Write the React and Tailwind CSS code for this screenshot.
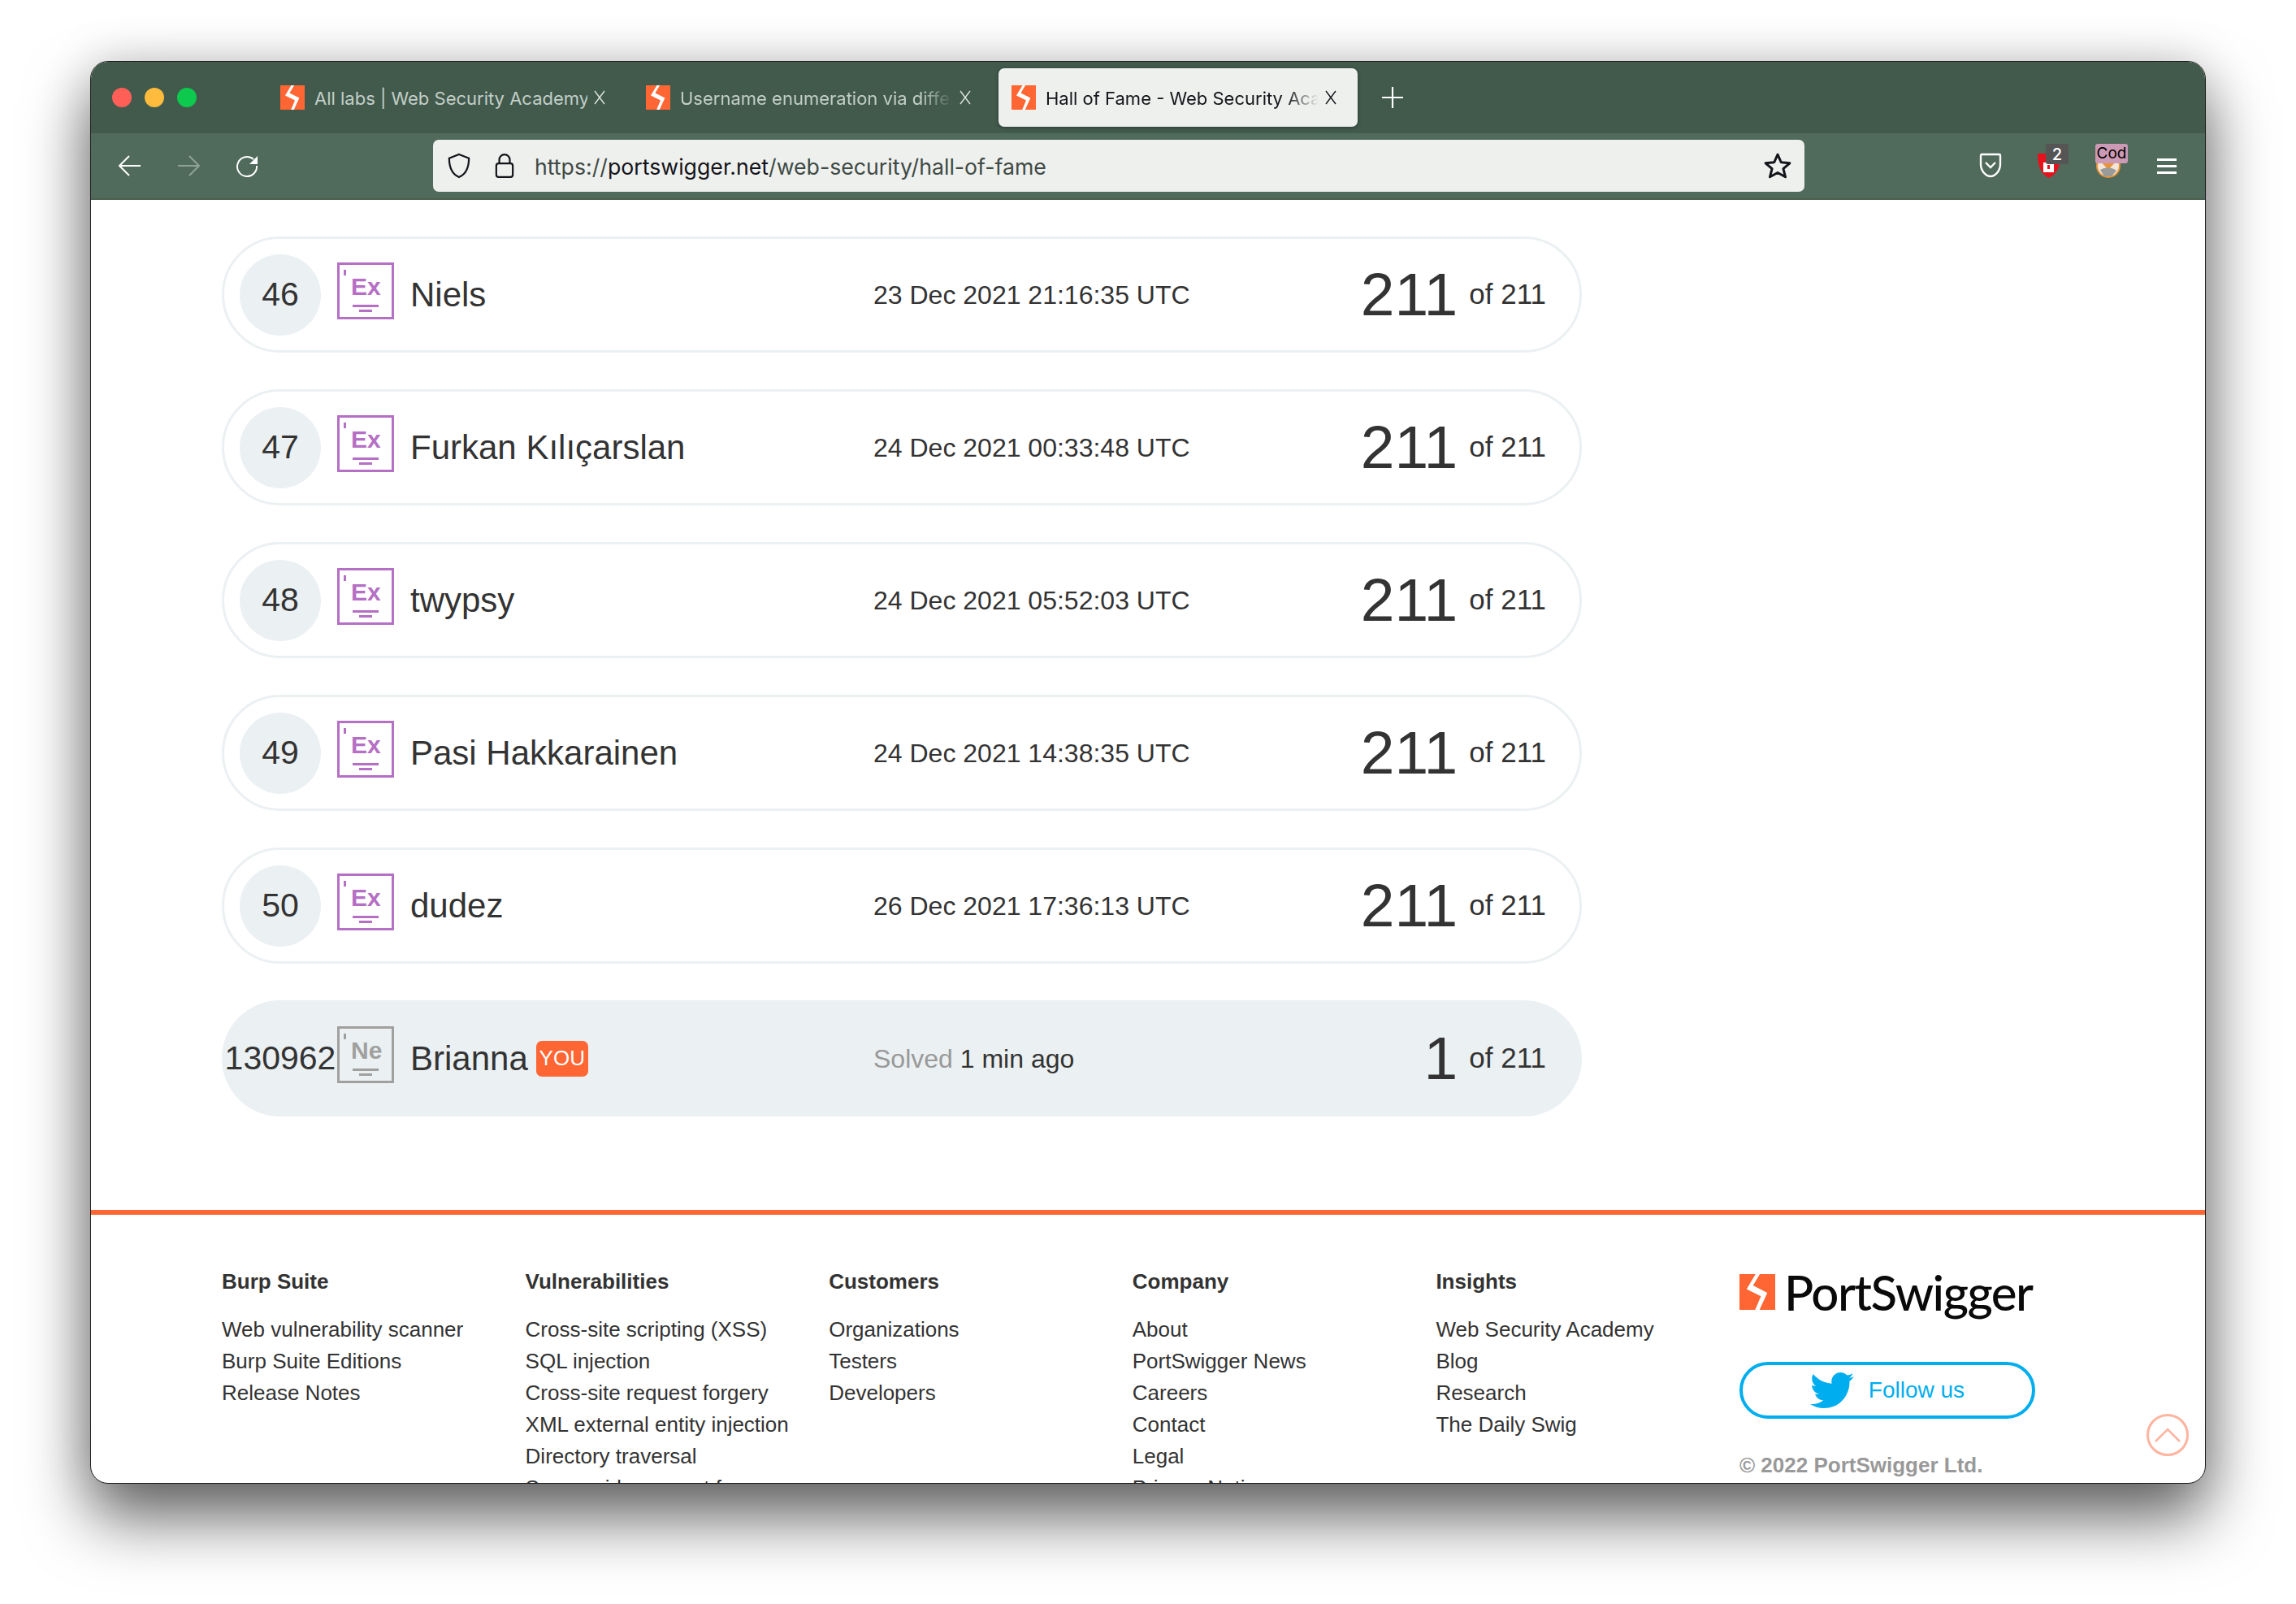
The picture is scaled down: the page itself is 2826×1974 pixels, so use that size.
import React from 'react';
import { FaTwitter } from 'react-icons/fa';

const rows = [
  { rank: '46', name: 'Niels', date: '23 Dec 2021 21:16:35 UTC' },
  { rank: '47', name: 'Furkan Kılıçarslan', date: '24 Dec 2021 00:33:48 UTC' },
  { rank: '48', name: 'twypsy', date: '24 Dec 2021 05:52:03 UTC' },
  { rank: '49', name: 'Pasi Hakkarainen', date: '24 Dec 2021 14:38:35 UTC' },
  { rank: '50', name: 'dudez', date: '26 Dec 2021 17:36:13 UTC' },
];

const footer = [
  { title: 'Burp Suite', links: ['Web vulnerability scanner', 'Burp Suite Editions', 'Release Notes'] },
  { title: 'Vulnerabilities', links: ['Cross-site scripting (XSS)', 'SQL injection', 'Cross-site request forgery', 'XML external entity injection', 'Directory traversal', 'Server-side request forgery'] },
  { title: 'Customers', links: ['Organizations', 'Testers', 'Developers'] },
  { title: 'Company', links: ['About', 'PortSwigger News', 'Careers', 'Contact', 'Legal', 'Privacy Notice'] },
  { title: 'Insights', links: ['Web Security Academy', 'Blog', 'Research', 'The Daily Swig'] },
];

const Bolt = ({ className }) => (
  <svg viewBox="0 0 100 100" className={className}>
    <rect width="100" height="100" fill="#ff6633" />
    <path d="M45 0H57L38 32L78 52L56 100H44L60 62L20 42Z" fill="#fff" />
  </svg>
);

const Close = ({ color }) => (
  <svg viewBox="0 0 14 18" className="w-[14px] h-[18px] shrink-0">
    <path d="M1 1 L13 17 M13 1 L1 17" stroke={color} strokeWidth="1.4" />
  </svg>
);

const Tab = ({ title, active, fade }) => (
  <div className={`w-[442px] h-[72px] flex items-center pl-[16px] rounded-[7px] ${active ? 'bg-[#eef0ee] shadow-[0_1px_4px_rgba(0,0,0,0.35)] text-[#15141a]' : 'text-[#c3cec8]'}`}>
    <Bolt className="w-[30px] h-[30px] shrink-0" />
    <div className={`ml-[12px] mt-[2px] w-[336px] whitespace-nowrap overflow-hidden text-[22px] ${fade ? '[mask-image:linear-gradient(to_right,black_88%,transparent_100%)]' : ''}`}>{title}</div>
    <div className="ml-[8px] flex"><Close color={active ? '#15141a' : '#dfe5e1'} /></div>
  </div>
);

const Element = ({ sym, gray }) => (
  <div className={`relative ml-[20px] mb-[9px] w-[70px] h-[70px] shrink-0 border-[3px] ${gray ? 'border-[#a0a09e] text-[#a0a09e]' : 'border-[#b56fc4] text-[#b56fc4]'}`}>
    <div className={`absolute left-[5px] top-[6px] w-[3px] h-[7px] ${gray ? 'bg-[#a0a09e]' : 'bg-[#b56fc4]'}`} />
    <div className="absolute left-[14px] top-[12px] text-[30px] leading-[30px] font-bold">{sym}</div>
    <div className={`absolute left-[16px] top-[49px] w-[32px] h-[3px] ${gray ? 'bg-[#a0a09e]' : 'bg-[#b56fc4]'}`} />
    <div className={`absolute left-[24px] top-[55px] w-[16px] h-[3px] ${gray ? 'bg-[#a0a09e]' : 'bg-[#b56fc4]'}`} />
  </div>
);

const Score = ({ value }) => (
  <div className="ml-auto flex items-center">
    <span className="text-[75px] leading-none">{value}</span>
    <span className="ml-[14px] text-[35px]">of 211</span>
  </div>
);

const Row = ({ rank, name, date }) => (
  <div className="h-[143px] rounded-[72px] border-[3px] border-[#ebf0f2] flex items-center pl-[19px] pr-[41px]">
    <div className="w-[100px] h-[100px] shrink-0 rounded-full bg-[#ebf0f2] flex items-center justify-center text-[41px]">{rank}</div>
    <Element sym="Ex" />
    <div className="ml-[20px] w-[570px] text-[42px]">{name}</div>
    <div className="text-[32px]">{date}</div>
    <Score value="211" />
  </div>
);

export default function App() {
  return (
    <div className="min-h-[1974px] bg-white pt-[75px] pl-[111px] font-['Liberation_Sans',sans-serif] text-[#333]">
      <div className="relative w-[2604px] h-[1751px] rounded-[22px] border border-[#1c1c1c] overflow-hidden shadow-[0_42px_80px_rgba(0,0,0,0.6),0_0_60px_rgba(0,0,0,0.15)] bg-white flex flex-col">
        <div className="h-[88px] shrink-0 bg-[#415a4c] flex items-center pl-[26px] font-['Inter',sans-serif]">
          <div className="flex gap-[16px]">
            <span className="w-[24px] h-[24px] rounded-full bg-[#ff5f57]" />
            <span className="w-[24px] h-[24px] rounded-full bg-[#ffbb3d]" />
            <span className="w-[24px] h-[24px] rounded-full bg-[#0dc94d]" />
          </div>
          <div className="ml-[87px] flex gap-[8px]">
            <Tab title="All labs | Web Security Academy" />
            <Tab title="Username enumeration via different responses" fade />
            <Tab title="Hall of Fame - Web Security Academy" active fade />
          </div>
          <svg viewBox="0 0 24 24" className="ml-[30px] w-[26px] h-[26px]" stroke="#fff" strokeWidth="2" fill="none"><path d="M12 0V24M0 12H24" /></svg>
        </div>
        <div className="h-[82px] shrink-0 bg-[#506a5b] border-b-[2px] border-[#48604f] flex items-center font-['Inter',sans-serif]">
          <svg viewBox="0 0 30 30" className="ml-[33px] w-[30px] h-[30px]" stroke="#fff" strokeWidth="2" fill="none"><path d="M28 15H2M14 3L2 15L14 27" /></svg>
          <svg viewBox="0 0 30 30" className="ml-[42px] w-[30px] h-[30px]" stroke="#8fa398" strokeWidth="2" fill="none"><path d="M2 15H28M16 3L28 15L16 27" /></svg>
          <svg viewBox="0 0 30 30" className="ml-[42px] w-[30px] h-[30px]" fill="none"><path d="M23 7A12 12 0 1 0 27 15" stroke="#fff" strokeWidth="2" /><path d="M28 3V13H18Z" fill="#fff" /></svg>
          <div className="ml-[214px] w-[1688px] h-[64px] rounded-[7px] bg-[#eef0ee] flex items-center text-[#15141a]">
            <svg viewBox="0 0 30 34" className="ml-[18px] w-[28px] h-[32px]" stroke="#15141a" strokeWidth="2.4" fill="none"><path d="M15 2L28 7C28 20 24 28 15 32C6 28 2 20 2 7Z" /></svg>
            <svg viewBox="0 0 26 34" className="ml-[30px] w-[24px] h-[32px]" stroke="#15141a" strokeWidth="2.4" fill="none"><path d="M6 14V9A7 7 0 0 1 20 9V14" /><rect x="2" y="14" width="22" height="18" rx="3" /></svg>
            <div className="ml-[25px] mt-[2px] text-[26.7px] text-[#3f4a44]">https://<span className="text-[#15141a]">portswigger.net</span>/web-security/hall-of-fame</div>
            <svg viewBox="0 0 32 32" className="ml-auto mr-[16px] w-[34px] h-[34px]" stroke="#15141a" strokeWidth="2.8" strokeLinejoin="round" fill="none"><path d="M16 3L20 12L30 13L22.5 19.5L25 29L16 24L7 29L9.5 19.5L2 13L12 12Z" /></svg>
          </div>
          <svg viewBox="0 0 28 32" className="ml-[215px] w-[28px] h-[32px]" stroke="#fff" strokeWidth="2.4" fill="none"><path d="M3 2H25Q26 2 26 4V14C26 22 20 29 14 29C8 29 2 22 2 14V4Q2 2 3 2Z" /><path d="M8 12L14 18L20 12" /></svg>
          <div className="relative ml-[43px] w-[30px] h-[30px]">
            <svg viewBox="0 0 30 30" className="absolute left-0 top-0 w-[30px] h-[30px]"><path d="M15 0L29 0C29 16 25 25 15 30C5 25 1 16 1 0Z" fill="#e8121c" /><rect x="8" y="11" width="13" height="12" fill="#fff" /><rect x="13" y="14" width="3" height="5" fill="#e8121c" /></svg>
            <div className="absolute left-[11px] top-[-12px] w-[28px] h-[25px] rounded-[3px] bg-[#555] text-white text-[20px] font-medium flex items-center justify-center">2</div>
          </div>
          <div className="relative ml-[43px] w-[30px] h-[30px]">
            <svg viewBox="0 0 30 30" className="absolute left-0 top-0 w-[30px] h-[30px]"><circle cx="15" cy="15" r="14" fill="#f3e6d8" stroke="#e8943a" strokeWidth="2" /><path d="M4 8H26L15 20Z" fill="#e8943a" /><path d="M5 20Q15 14 25 21L19 28H10Z" fill="#9a9a9a" /></svg>
            <div className="absolute left-[-1px] top-[-12px] w-[40px] h-[24px] rounded-[3px] bg-[#cc9ab4] text-black text-[19px] flex items-center justify-center">Cod</div>
          </div>
          <div className="ml-[45px] w-[24px] flex flex-col gap-[5px]">
            <span className="h-[3px] bg-white" />
            <span className="h-[3px] bg-white" />
            <span className="h-[3px] bg-white" />
          </div>
        </div>

        <div className="flex-1 overflow-hidden">
          <div className="pt-[45px] pl-[161px] w-[1835px] flex flex-col gap-[45px]">
            {rows.map((r) => <Row key={r.rank} {...r} />)}
            <div className="h-[143px] rounded-[72px] bg-[#ebf0f2] flex items-center pl-[22px] pr-[44px]">
              <div className="w-[100px] shrink-0 flex justify-center text-[41px]">130962</div>
              <Element sym="Ne" gray />
              <div className="ml-[20px] w-[570px] flex items-center">
                <div className="text-[42px]">Brianna</div>
                <div className="ml-[10px] w-[64px] h-[44px] rounded-[7px] bg-[#ff6633] text-white text-[26px] flex items-center justify-center">YOU</div>
              </div>
              <div className="text-[32px]"><span className="text-[#999]">Solved</span> 1 min ago</div>
              <Score value="1" />
            </div>
          </div>
          <div className="mt-[115px] border-t-[6px] border-[#ff6633] pt-[63px] pl-[161px] flex">
            {footer.map((col) => (
              <div key={col.title} className="w-[373.6px] shrink-0">
                <div className="text-[26px] font-bold leading-[39px] mb-[20px]">{col.title}</div>
                {col.links.map((l) => <div key={l} className="text-[26px] leading-[39px] whitespace-nowrap">{l}</div>)}
              </div>
            ))}
            <div className="shrink-0">
              <div className="flex items-center mt-[10px]">
                <Bolt className="w-[44px] h-[44px]" />
                <span className="ml-[11px] font-['Lato',sans-serif] text-[60px] leading-[44px] font-medium text-[#0a0a0a] tracking-[-1.5px]">PortSwigger</span>
              </div>
              <div className="mt-[64px] w-[364px] h-[70px] rounded-[35px] border-[4px] border-[#00aeef] text-[#00aeef] flex items-center justify-center">
                <FaTwitter className="w-[54px] h-[54px]" />
                <span className="ml-[18px] text-[28px]">Follow us</span>
              </div>
              <div className="mt-[38px] text-[26px] font-bold text-[#999]">© 2022 PortSwigger Ltd.</div>
            </div>
          </div>
        </div>

        <div className="absolute left-[2530px] top-[1664px] w-[52px] h-[52px] rounded-full border-[3px] border-[#ffb4a0] flex items-center justify-center">
          <svg viewBox="0 0 32 18" className="w-[32px] h-[18px]" fill="none" stroke="#ffb4a0" strokeWidth="2.6"><path d="M1 17L16 2L31 17" /></svg>
        </div>
      </div>
    </div>
  );
}
